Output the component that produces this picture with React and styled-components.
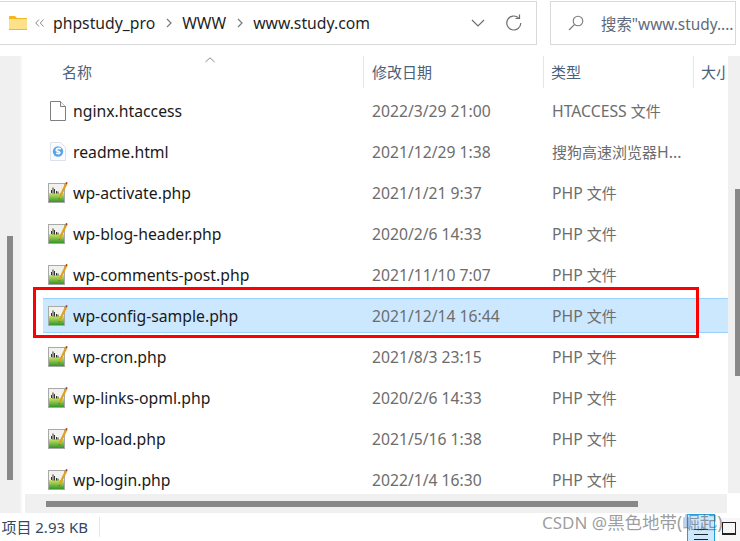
import React from "react";
import styled, { createGlobalStyle } from "styled-components";

const Global = createGlobalStyle`
  html, body { margin: 0; padding: 0; background: #fff; }
  #root { width: 740px; height: 541px; overflow: hidden; }
`;

const FONT = `"Noto Sans", "Noto Sans CJK SC", sans-serif`;

const Page = styled.div`
  position: relative;
  width: 740px;
  height: 541px;
  overflow: hidden;
  background: #fff;
  font-family: ${FONT};
  font-size: 15px;
  display: flex;
  flex-direction: column;
`;

const TopBar = styled.div`
  height: 56px;
  flex: none;
  box-sizing: border-box;
  padding-top: 1px;
  display: flex;
  gap: 13px;
`;

const AddressBox = styled.div`
  width: 537px;
  height: 44px;
  box-sizing: border-box;
  border: 1px solid #d9d9d9;
  border-left: none;
  display: flex;
  align-items: center;
  padding-left: 9px;
  color: #1f1f1f;
  font-size: 15.75px;
`;

const Crumb = styled.span`
  white-space: nowrap;
`;

const Chevron = styled.span`
  width: ${(p) => p.$width}px;
  display: flex;
  justify-content: center;
  flex: none;
`;

const AddressEnd = styled.div`
  margin-left: auto;
  display: flex;
  align-items: center;
  gap: 20px;
  padding-right: 13px;
`;

const SearchBox = styled.div`
  width: 186px;
  height: 44px;
  box-sizing: border-box;
  border: 1px solid #d9d9d9;
  display: flex;
  align-items: center;
  padding-left: 17px;
  gap: 17px;
  color: #5f6b7a;
  font-size: 15.4px;
  white-space: nowrap;
  overflow: hidden;
`;

const Body = styled.div`
  height: 457px;
  flex: none;
  display: flex;
`;

const LeftRail = styled.div`
  width: 13px;
  flex: none;
  background: #f0f0f0;
  border-right: 2px solid #f6f6f6;
  padding: 180px 0 0 7px;
  box-sizing: content-box;
`;

const LeftThumb = styled.div`
  width: 6px;
  height: 244px;
  background: #888;
`;

const Main = styled.div`
  flex: 1;
  min-width: 0;
  display: flex;
  flex-direction: column;
`;

const Upper = styled.div`
  height: 438px;
  flex: none;
  display: flex;
`;

const Content = styled.div`
  width: 706px;
  flex: none;
  overflow: hidden;
`;

const Header = styled.div`
  height: 32px;
  position: relative;
  display: grid;
  grid-template-columns: 342px 180px 150px 31px;
  color: #4c607a;
  font-size: 15px;
`;

const HeadCell = styled.div`
  box-sizing: border-box;
  padding-left: ${(p) => p.$pad}px;
  padding-top: 5px;
  border-right: ${(p) => (p.$sep ? "1px solid #e5e5e5" : "none")};
  white-space: nowrap;
  overflow: hidden;
`;

const SortCaret = styled.svg`
  position: absolute;
  left: 183px;
  top: 1px;
`;

const List = styled.div`
  padding: 5px 0 0 21px;
  display: flex;
  flex-direction: column;
  gap: 6px;
`;

const Row = styled.div`
  height: 35px;
  flex: none;
  box-sizing: border-box;
  display: grid;
  grid-template-columns: 30px 299px 180px 1fr;
  align-items: center;
  line-height: 22px;
  background: ${(p) => (p.$selected ? "#cce8ff" : "transparent")};
  border-top: 1px solid ${(p) => (p.$selected ? "#99d1ff" : "transparent")};
  border-bottom: 1px solid ${(p) => (p.$selected ? "#99d1ff" : "transparent")};
`;

const IconCell = styled.div`
  width: 20px;
  margin-left: 5px;
  display: flex;
  justify-content: center;
`;

const Name = styled.div`
  color: #1a1a1a;
  font-size: 15.75px;
  white-space: nowrap;
`;

const DateText = styled.div`
  color: #6d6d6d;
  font-size: 15.7px;
  white-space: nowrap;
  overflow: hidden;
`;

const TypeText = styled.div`
  color: #6d6d6d;
  font-size: 15.75px;
  white-space: nowrap;
  overflow: hidden;
`;

const TypeCjk = styled.span`
  font-size: 15px;
`;

const RightRail = styled.div`
  width: 12px;
  margin-left: auto;
  background: #f0f0f0;
  padding: 133px 0 0 7px;
  box-sizing: border-box;
  height: 437px;
`;

const RightThumb = styled.div`
  width: 5px;
  height: 187px;
  background: #888;
`;

const BottomRail = styled.div`
  margin-left: 3px;
  width: 702px;
  height: 19px;
  background: #f0f0f0;
  padding: 7px 0 0 21px;
  box-sizing: border-box;
`;

const BottomThumb = styled.div`
  width: 592px;
  height: 6px;
  background: #888;
`;

const Status = styled.div`
  flex: 1;
  display: flex;
  align-items: center;
  color: #33475f;
  font-size: 15px;
`;

const StatusText = styled.div`
  width: 100px;
  box-sizing: border-box;
  height: 20px;
  line-height: 20px;
  border-right: 1px solid #e8e8e8;
  white-space: nowrap;
  overflow: hidden;
  display: flex;
  justify-content: flex-end;
  padding-right: 11px;
`;

const ViewButtons = styled.div`
  margin-left: auto;
  align-self: flex-end;
  display: flex;
  align-items: flex-end;
  height: 27px;
`;

const ListViewButton = styled.div`
  width: 28px;
  height: 27px;
  box-sizing: border-box;
  display: flex;
  align-items: flex-end;
  justify-content: center;
  padding-bottom: 1px;
  background: #cce8ff;
  border: 1px solid #26a0da;
  border-bottom: none;
`;

const TileViewButton = styled.div`
  width: 21px;
  height: 23px;
  margin-left: 4px;
  box-sizing: border-box;
  padding: 4px 0 0 3px;
  background: #f6f6f6;
`;

const RedFrame = styled.div`
  position: absolute;
  left: 33px;
  top: 287px;
  width: 666px;
  height: 51px;
  box-sizing: border-box;
  border: 3px solid #f00;
  pointer-events: none;
`;

const Watermark = styled.div`
  position: absolute;
  left: 542px;
  top: 509px;
  color: rgba(90, 90, 90, 0.6);
  font-size: 17px;
  line-height: 26px;
  white-space: nowrap;
  pointer-events: none;
`;

const WatermarkName = styled.span`
  font-size: 17.5px;
`;

const FolderIcon = () => (
  <svg width="18" height="14" viewBox="0 0 18 14" style={{ flex: "none" }}>
    <path d="M0 1.2C0 .5.4 0 1 0h5l2 2h9c.6 0 1 .4 1 1v1H0z" fill="#f3b71f" />
    <rect x="0" y="3" width="18" height="11" rx="1" fill="#fde08a" />
    <rect x="0" y="13" width="18" height="1" fill="#eeb829" />
  </svg>
);

const BlankFileIcon = () => (
  <svg width="16" height="20" viewBox="0 0 16 20">
    <path d="M.5.500h10l5 5v14h-15z" fill="#fff" stroke="#7f7f7f" />
    <path d="M10.500.5v5h5" fill="#f4f4f4" stroke="#7f7f7f" />
  </svg>
);

const HtmlFileIcon = () => (
  <svg width="16" height="19" viewBox="0 0 16 19">
    <path d="M.5.500h10l5 5v13h-15z" fill="#fafcff" stroke="#dde2e8" />
    <circle cx="8" cy="9.500" r="5.200" fill="#5aa5e8" />
    <path d="M10.800 7C9.400 5.800 6.700 6.200 6.200 7.900c-.4 1.600 3.600 1.400 3.600 2.900 0 1-1.700 1.100-3.600.2" fill="none" stroke="#fff" strokeWidth="1.700" />
  </svg>
);

const PhpFileIcon = () => (
  <svg width="20" height="21" viewBox="0 0 20 21">
    <defs>
      <linearGradient id="phpGreen" x1="0" y1="0" x2="0" y2="1">
        <stop offset="0" stopColor="#cfe565" />
        <stop offset="1" stopColor="#35962a" />
      </linearGradient>
    </defs>
    <rect x=".5" y="1.500" width="16" height="19" fill="#f1f1ee" stroke="#a9a9a9" />
    <rect x="1" y="11" width="15" height="9" fill="url(#phpGreen)" />
    <path d="M3.500 8v3M5 5.500v6M6.500 7v4.500M8.500 9v2.500M10 9.500v2" stroke="#333" strokeWidth="1" />
    <path d="M18.800.8 11.500 15.500" stroke="#e0a020" strokeWidth="2.200" />
    <path d="M18.300 0l1.200.6-.9 1.700-1.200-.6z" fill="#a03a30" />
    <path d="M11 16l-.3 1.500 1.200-.9z" fill="#444" />
  </svg>
);

const php = "PHP 文件";
const files = [
  { name: "nginx.htaccess", date: "2022/3/29 21:00", type: "HTACCESS 文件", icon: BlankFileIcon },
  { name: "readme.html", date: "2021/12/29 1:38", type: "搜狗高速浏览器H...", icon: HtmlFileIcon },
  { name: "wp-activate.php", date: "2021/1/21 9:37", type: php, icon: PhpFileIcon },
  { name: "wp-blog-header.php", date: "2020/2/6 14:33", type: php, icon: PhpFileIcon },
  { name: "wp-comments-post.php", date: "2021/11/10 7:07", type: php, icon: PhpFileIcon },
  { name: "wp-config-sample.php", date: "2021/12/14 16:44", type: php, icon: PhpFileIcon, selected: true },
  { name: "wp-cron.php", date: "2021/8/3 23:15", type: php, icon: PhpFileIcon },
  { name: "wp-links-opml.php", date: "2020/2/6 14:33", type: php, icon: PhpFileIcon },
  { name: "wp-load.php", date: "2021/5/16 1:38", type: php, icon: PhpFileIcon },
  { name: "wp-login.php", date: "2022/1/4 16:30", type: php, icon: PhpFileIcon },
];

const typeParts = (text) =>
  text
    .split(/([\u4e00-\u9fff]+)/)
    .map((part, i) => (i % 2 ? <TypeCjk key={i}>{part}</TypeCjk> : part));

const Sep = () => (
  <Chevron $width={27}>
    <svg width="6" height="10" viewBox="0 0 6 10">
      <path d="M1 1l4 4-4 4" fill="none" stroke="#7a7a7a" strokeWidth="1.200" />
    </svg>
  </Chevron>
);

export default function App() {
  return (
    <Page>
      <Global />
      <TopBar>
        <AddressBox>
          <FolderIcon />
          <Chevron $width={26}>
            <svg width="10" height="8" viewBox="0 0 10 8">
              <path d="M4 .5.8 4 4 7.500M8.500.5 5.300 4l3.200 3.500" fill="none" stroke="#8a8a8a" strokeWidth="1" />
            </svg>
          </Chevron>
          <Crumb>phpstudy_pro</Crumb>
          <Sep />
          <Crumb>WWW</Crumb>
          <Sep />
          <Crumb>www.study.com</Crumb>
          <AddressEnd>
            <svg width="14" height="8" viewBox="0 0 14 8">
              <path d="M1 1l6 6 6-6" fill="none" stroke="#6e6e6e" strokeWidth="1.200" />
            </svg>
            <svg width="18" height="18" viewBox="0 0 18 18">
              <path d="M15.800 9a7 7 0 1 1-2.200-5.100" fill="none" stroke="#6e6e6e" strokeWidth="1.200" />
              <path d="M14.500.5v4h-4" fill="none" stroke="#6e6e6e" strokeWidth="1.200" />
            </svg>
          </AddressEnd>
        </AddressBox>
        <SearchBox>
          <svg width="16" height="16" viewBox="0 0 16 16" style={{ flex: "none" }}>
            <circle cx="10" cy="6" r="4.800" fill="none" stroke="#7a7a7a" strokeWidth="1.100" />
            <path d="M6.500 9.500 1 15" stroke="#7a7a7a" strokeWidth="1.100" />
          </svg>
          <span>搜索"www.study....</span>
        </SearchBox>
      </TopBar>
      <Body>
        <LeftRail>
          <LeftThumb />
        </LeftRail>
        <Main>
          <Upper>
            <Content>
              <Header>
                <HeadCell $sep $pad={40}>名称</HeadCell>
                <HeadCell $sep $pad={8}>修改日期</HeadCell>
                <HeadCell $sep $pad={7}>类型</HeadCell>
                <HeadCell $pad={7}>大小</HeadCell>
                <SortCaret width="10" height="6" viewBox="0 0 10 6">
                  <path d="M.5 5 5 .8 9.500 5" fill="none" stroke="#8a8a8a" strokeWidth="1" />
                </SortCaret>
              </Header>
              <List>
                {files.map((f) => (
                  <Row key={f.name} $selected={f.selected}>
                    <IconCell>
                      <f.icon />
                    </IconCell>
                    <Name>{f.name}</Name>
                    <DateText>{f.date}</DateText>
                    <TypeText>{typeParts(f.type)}</TypeText>
                  </Row>
                ))}
              </List>
            </Content>
            <RightRail>
              <RightThumb />
            </RightRail>
          </Upper>
          <BottomRail>
            <BottomThumb />
          </BottomRail>
        </Main>
      </Body>
      <Status>
        <StatusText>项目 2.93 KB</StatusText>
        <ViewButtons>
          <ListViewButton>
            <svg width="14" height="12" viewBox="0 0 14 12" style={{ display: "block" }}>
              <path d="M0 1.500h14M0 6.500h14M0 11.500h14" stroke="#222" strokeWidth="1" />
            </svg>
          </ListViewButton>
          <TileViewButton>
            <svg width="14" height="13" viewBox="0 0 14 13" style={{ display: "block" }}>
              <rect x=".5" y=".5" width="13" height="11" fill="none" stroke="#222" />
              <path d="M0 12.500h14" stroke="#222" strokeWidth="1" />
            </svg>
          </TileViewButton>
        </ViewButtons>
      </Status>
      <RedFrame />
      <Watermark>CSDN @<WatermarkName>黑色地带(崛起)</WatermarkName></Watermark>
    </Page>
  );
}
